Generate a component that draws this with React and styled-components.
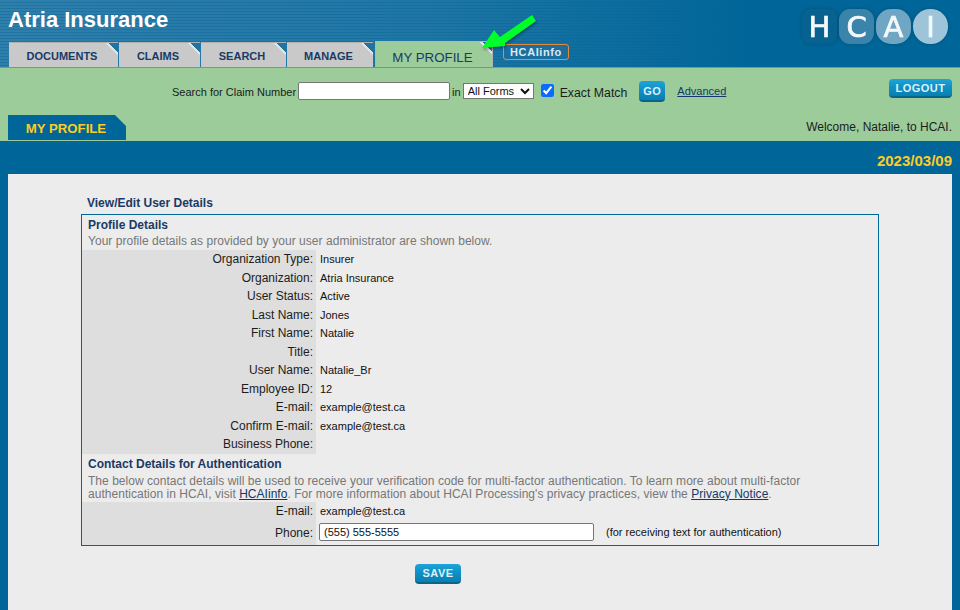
import { Fragment } from "react";
import styled, { createGlobalStyle } from "styled-components";

const GlobalStyle = createGlobalStyle`
  html, body {
    margin: 0;
    padding: 0;
    height: 100%;
    overflow: hidden;
    background: #006699;
    font-family: "Liberation Sans", Arial, sans-serif;
  }
  * {
    box-sizing: border-box;
  }
`;

const Page = styled.div`
  position: relative;
  display: flex;
  flex-direction: column;
  height: 610px;
  overflow: hidden;
`;

const Header = styled.header`
  display: flex;
  justify-content: space-between;
  height: 68px;
  padding: 0 12px 0 8px;
  background:
    linear-gradient(to right, rgba(0, 102, 153, 0) 0%, rgba(0, 102, 153, 0.35) 45%, #006699 78%),
    repeating-linear-gradient(to bottom, #2f7fab 0, #2f7fab 2px, #1f74a3 2px, #1f74a3 3px);
  border-bottom: 1px solid #5b9bbd;
`;

const HeaderLeft = styled.div`
  display: flex;
  flex-direction: column;
`;

const Company = styled.h1`
  margin: 0;
  height: 42px;
  padding-top: 7px;
  font-size: 22px;
  line-height: 26px;
  font-weight: bold;
  color: #ffffff;
`;

const TabRow = styled.nav`
  display: flex;
  align-items: flex-end;
  height: 26px;
  padding-left: 1px;
`;

const Tab = styled.a`
  display: flex;
  align-items: center;
  justify-content: center;
  width: ${(p) => p.$width}px;
  height: ${(p) => (p.$active ? 26 : 25)}px;
  margin-right: ${(p) => p.$gap}px;
  padding: ${(p) => (p.$active ? "6px 3px 0 0" : "2px 3px 0 0")};
  font-size: ${(p) => (p.$active ? 13.3 : 11)}px;
  font-weight: ${(p) => (p.$active ? "normal" : "bold")};
  color: #1a3a66;
  background: linear-gradient(
    225deg,
    #1f74a3 0,
    #1f74a3 7px,
    #e2e2e2 7px,
    #e2e2e2 9px,
    ${(p) => (p.$active ? "#9bcc99" : "#c9c9c9")} 9px
  );
  border-top: 1px solid ${(p) => (p.$active ? "#b4b4b4" : "#b0b0b0")};
  ${(p) => p.$active && "border-left: 1px solid #b4b4b4; border-right: 1px solid #b4b4b4;"}
`;

const InfoButton = styled.a`
  display: flex;
  align-items: center;
  justify-content: center;
  width: 66px;
  height: 16px;
  margin: 0 0 7px 10px;
  align-self: flex-end;
  font-size: 11px;
  font-weight: bold;
  letter-spacing: 0.6px;
  color: #dbe9f2;
  background: #1b6f9f;
  border: 1px solid #e8893a;
  border-radius: 3px;
`;

const LogoMark = styled.svg`
  display: block;
  margin-top: 8px;
  width: 146px;
  height: 38px;
  filter: drop-shadow(0 0 2px #00507c);
`;

const Arrow = styled.svg`
  position: absolute;
  left: 476px;
  top: 10px;
  width: 66px;
  height: 46px;
  filter: drop-shadow(1px 2px 1px rgba(0, 0, 0, 0.3));
`;

const GreenBar = styled.section`
  height: 73px;
  display: flex;
  flex-direction: column;
  background: #9bcc99;
`;

const SearchRow = styled.div`
  display: flex;
  align-items: flex-start;
  height: 47px;
  padding: 14px 8px 0 172px;
  font-size: 11px;
  color: #1c1c1c;
`;

const SearchLabel = styled.label`
  margin: 3px 0 0 ${(p) => p.$left || 0}px;
  line-height: 14px;
`;

const TextInput = styled.input`
  width: ${(p) => p.$width}px;
  height: 18px;
  margin: ${(p) => p.$margin || "0"};
  padding: 0 4px;
  font-family: "Liberation Sans", Arial, sans-serif;
  font-size: 11px;
  color: #111111;
  background: #ffffff;
  border: 1px solid #767676;
  border-radius: 2px;
  outline: none;
`;

const FormSelect = styled.select`
  width: 71px;
  height: 16px;
  margin: 1px 0 0 2px;
  padding: 0;
  font-family: "Liberation Sans", Arial, sans-serif;
  font-size: 11px;
  color: #111111;
  background: #ffffff;
  border: 1px solid #767676;
  border-radius: 0;
`;

const Check = styled.input`
  width: 13px;
  height: 13px;
  margin: 2px 0 0 7px;
  accent-color: #0a6cff;
`;

const ExactLabel = styled.span`
  margin: 4px 0 0 6px;
  font-size: 12.3px;
  line-height: 15px;
`;

const BlueButton = styled.button`
  display: flex;
  align-items: center;
  justify-content: center;
  width: ${(p) => p.$width}px;
  height: ${(p) => p.$height}px;
  margin: ${(p) => p.$margin || "0"};
  padding: 0;
  font-family: "Liberation Sans", Arial, sans-serif;
  font-size: 11px;
  font-weight: bold;
  letter-spacing: 0.5px;
  color: #dff1f9;
  background: linear-gradient(to bottom, #1ea3d8 0%, #0f8fc4 50%, #0a7fb1 100%);
  border: none;
  border-bottom: 2px solid #0a6489;
  border-radius: 4px;
`;

const AdvancedLink = styled.a`
  margin: 2px 0 0 12px;
  font-size: 11px;
  line-height: 14px;
  color: #14386b;
  text-decoration: underline;
`;

const Spacer = styled.div`
  flex: 1;
`;

const SubRow = styled.div`
  display: flex;
  align-items: flex-end;
  justify-content: space-between;
  height: 26px;
  padding: 0 8px;
`;

const SubTab = styled.div`
  display: flex;
  align-items: center;
  justify-content: center;
  width: 118px;
  height: 25px;
  margin-bottom: 1px;
  padding: 2px 2px 0 0;
  font-size: 13.2px;
  font-weight: bold;
  color: #ffcc22;
  background: #006699;
  clip-path: polygon(0 0, calc(100% - 11px) 0, 100% 11px, 100% 100%, 0 100%);
`;

const Welcome = styled.div`
  margin-bottom: 7px;
  font-size: 12px;
  line-height: 14px;
  color: #1c1c1c;
`;

const DateBar = styled.div`
  height: 33px;
  padding: 11px 8px 0 0;
  text-align: right;
  font-size: 15px;
  line-height: 17px;
  font-weight: bold;
  color: #ffcc22;
`;

const Content = styled.main`
  flex: 1;
  margin: 0 8px;
  padding: 22px 73px 0;
  background: #ececec;
`;

const SectionTitle = styled.h2`
  margin: 0 0 4px 6px;
  font-size: 12px;
  line-height: 14px;
  font-weight: bold;
  color: #1a3a66;
`;

const DetailBox = styled.div`
  border: 1px solid #006699;
`;

const GroupTitle = styled.h3`
  margin: 0;
  padding: ${(p) => p.$padding};
  font-size: 12px;
  line-height: 14px;
  font-weight: bold;
  color: #1a3a66;
`;

const HelpText = styled.p`
  margin: 0;
  padding: 0 6px;
  font-size: 12px;
  line-height: 13px;
  letter-spacing: 0.035px;
  color: #777777;

  a {
    color: #14386b;
    text-decoration: underline;
  }
`;

const FieldGrid = styled.div`
  display: grid;
  grid-template-columns: 234px 1fr;
  margin-top: ${(p) => p.$top || 0}px;
`;

const FieldLabel = styled.div`
  height: ${(p) => p.$height || 18.5}px;
  padding: ${(p) => p.$pad || 2}px 3px 0 0;
  text-align: right;
  font-size: 12px;
  line-height: 14px;
  color: #1c1c1c;
  background: #dedede;
`;

const FieldValue = styled.div`
  display: flex;
  align-items: flex-start;
  height: ${(p) => p.$height || 18.5}px;
  padding: ${(p) => p.$pad || 3}px 0 0 ${(p) => p.$left ?? 4}px;
  font-size: 11px;
  line-height: 13px;
  color: #111111;
`;

const PhoneHint = styled.span`
  margin: 3px 0 0 12px;
`;

const SaveRow = styled.div`
  display: flex;
  padding: 18px 0 0 334px;
`;

const profileFields = [
  ["Organization Type:", "Insurer"],
  ["Organization:", "Atria Insurance"],
  ["User Status:", "Active"],
  ["Last Name:", "Jones"],
  ["First Name:", "Natalie"],
  ["Title:", ""],
  ["User Name:", "Natalie_Br"],
  ["Employee ID:", "12"],
  ["E-mail:", "example@test.ca"],
  ["Confirm E-mail:", "example@test.ca"],
  ["Business Phone:", ""],
];

const tabs = [
  { label: "DOCUMENTS", width: 109, gap: 1 },
  { label: "CLAIMS", width: 81, gap: 1 },
  { label: "SEARCH", width: 85, gap: 1 },
  { label: "MANAGE", width: 86, gap: 2 },
  { label: "MY PROFILE", width: 118, gap: 0, active: true },
];

const logoLetters = [
  { letter: "H", x: 0, fill: "#07628f", r: 8 },
  { letter: "C", x: 37, fill: "#3a83ab", r: 11 },
  { letter: "A", x: 74, fill: "#6ea6c4", r: 15 },
  { letter: "I", x: 111, fill: "#9dc4d8", r: 17 },
];

const App = () => {
  return (
    <Page>
      <GlobalStyle />
      <Header>
        <HeaderLeft>
          <Company>Atria Insurance</Company>
          <TabRow>
            {tabs.map((tab) => (
              <Tab key={tab.label} $width={tab.width} $gap={tab.gap} $active={tab.active}>
                {tab.label}
              </Tab>
            ))}
            <InfoButton>HCAIinfo</InfoButton>
          </TabRow>
        </HeaderLeft>
        <LogoMark viewBox="0 0 146 38">
          {logoLetters.map((item) => (
            <g key={item.letter}>
              <rect x={item.x} y="1" width="35" height="35" rx={item.r} fill={item.fill} />
              <text
                x={item.x + 17.5}
                y="29"
                textAnchor="middle"
                fontFamily="'DejaVu Sans', sans-serif"
                fontSize="29"
                stroke="#f4f8fb"
                strokeWidth="0.7"
                fill="#f4f8fb"
              >
                {item.letter}
              </text>
            </g>
          ))}
        </LogoMark>
      </Header>
      <Arrow viewBox="0 0 66 46">
        <path d="M6 38 L18 20 L24 27 L56 5 L60 11 L29 33 L29 36 Z" fill="#00ff2a" />
      </Arrow>
      <GreenBar>
        <SearchRow>
          <SearchLabel>Search for Claim Number</SearchLabel>
          <TextInput $width={152} $margin="0 0 0 2px" />
          <SearchLabel as="span" $left={2}>in</SearchLabel>
          <FormSelect defaultValue="All Forms">
            <option>All Forms</option>
          </FormSelect>
          <Check type="checkbox" defaultChecked />
          <ExactLabel>Exact Match</ExactLabel>
          <BlueButton $width={26} $height={21} $margin="-1px 0 0 12px">GO</BlueButton>
          <AdvancedLink>Advanced</AdvancedLink>
          <Spacer />
          <BlueButton $width={63} $height={19} $margin="-3px 0 0 0">LOGOUT</BlueButton>
        </SearchRow>
        <SubRow>
          <SubTab>MY PROFILE</SubTab>
          <Welcome>Welcome, Natalie, to HCAI.</Welcome>
        </SubRow>
      </GreenBar>
      <DateBar>2023/03/09</DateBar>
      <Content>
        <SectionTitle>View/Edit User Details</SectionTitle>
        <DetailBox>
          <GroupTitle $padding="3px 6px 3px">Profile Details</GroupTitle>
          <HelpText>Your profile details as provided by your user administrator are shown below.</HelpText>
          <FieldGrid $top={2}>
            {profileFields.map(([label, value]) => (
              <Fragment key={label}>
                <FieldLabel>{label}</FieldLabel>
                <FieldValue>{value}</FieldValue>
              </Fragment>
            ))}
          </FieldGrid>
          <GroupTitle $padding="3px 6px 4px">Contact Details for Authentication</GroupTitle>
          <HelpText>
            The below contact details will be used to receive your verification code for multi-factor authentication. To learn more about multi-factor
            authentication in HCAI, visit <a>HCAIinfo</a>. For more information about HCAI Processing's privacy practices, view the <a>Privacy Notice</a>.
          </HelpText>
          <FieldGrid $top={1}>
            <FieldLabel $height={20}>E-mail:</FieldLabel>
            <FieldValue $height={20}>example@test.ca</FieldValue>
            <FieldLabel $height={23} $pad={4}>Phone:</FieldLabel>
            <FieldValue $height={23} $pad={1} $left={3}>
              <TextInput $width={275} defaultValue="(555) 555-5555" />
              <PhoneHint>(for receiving text for authentication)</PhoneHint>
            </FieldValue>
          </FieldGrid>
        </DetailBox>
        <SaveRow>
          <BlueButton $width={46} $height={20}>SAVE</BlueButton>
        </SaveRow>
      </Content>
    </Page>
  );
};

export default App;
